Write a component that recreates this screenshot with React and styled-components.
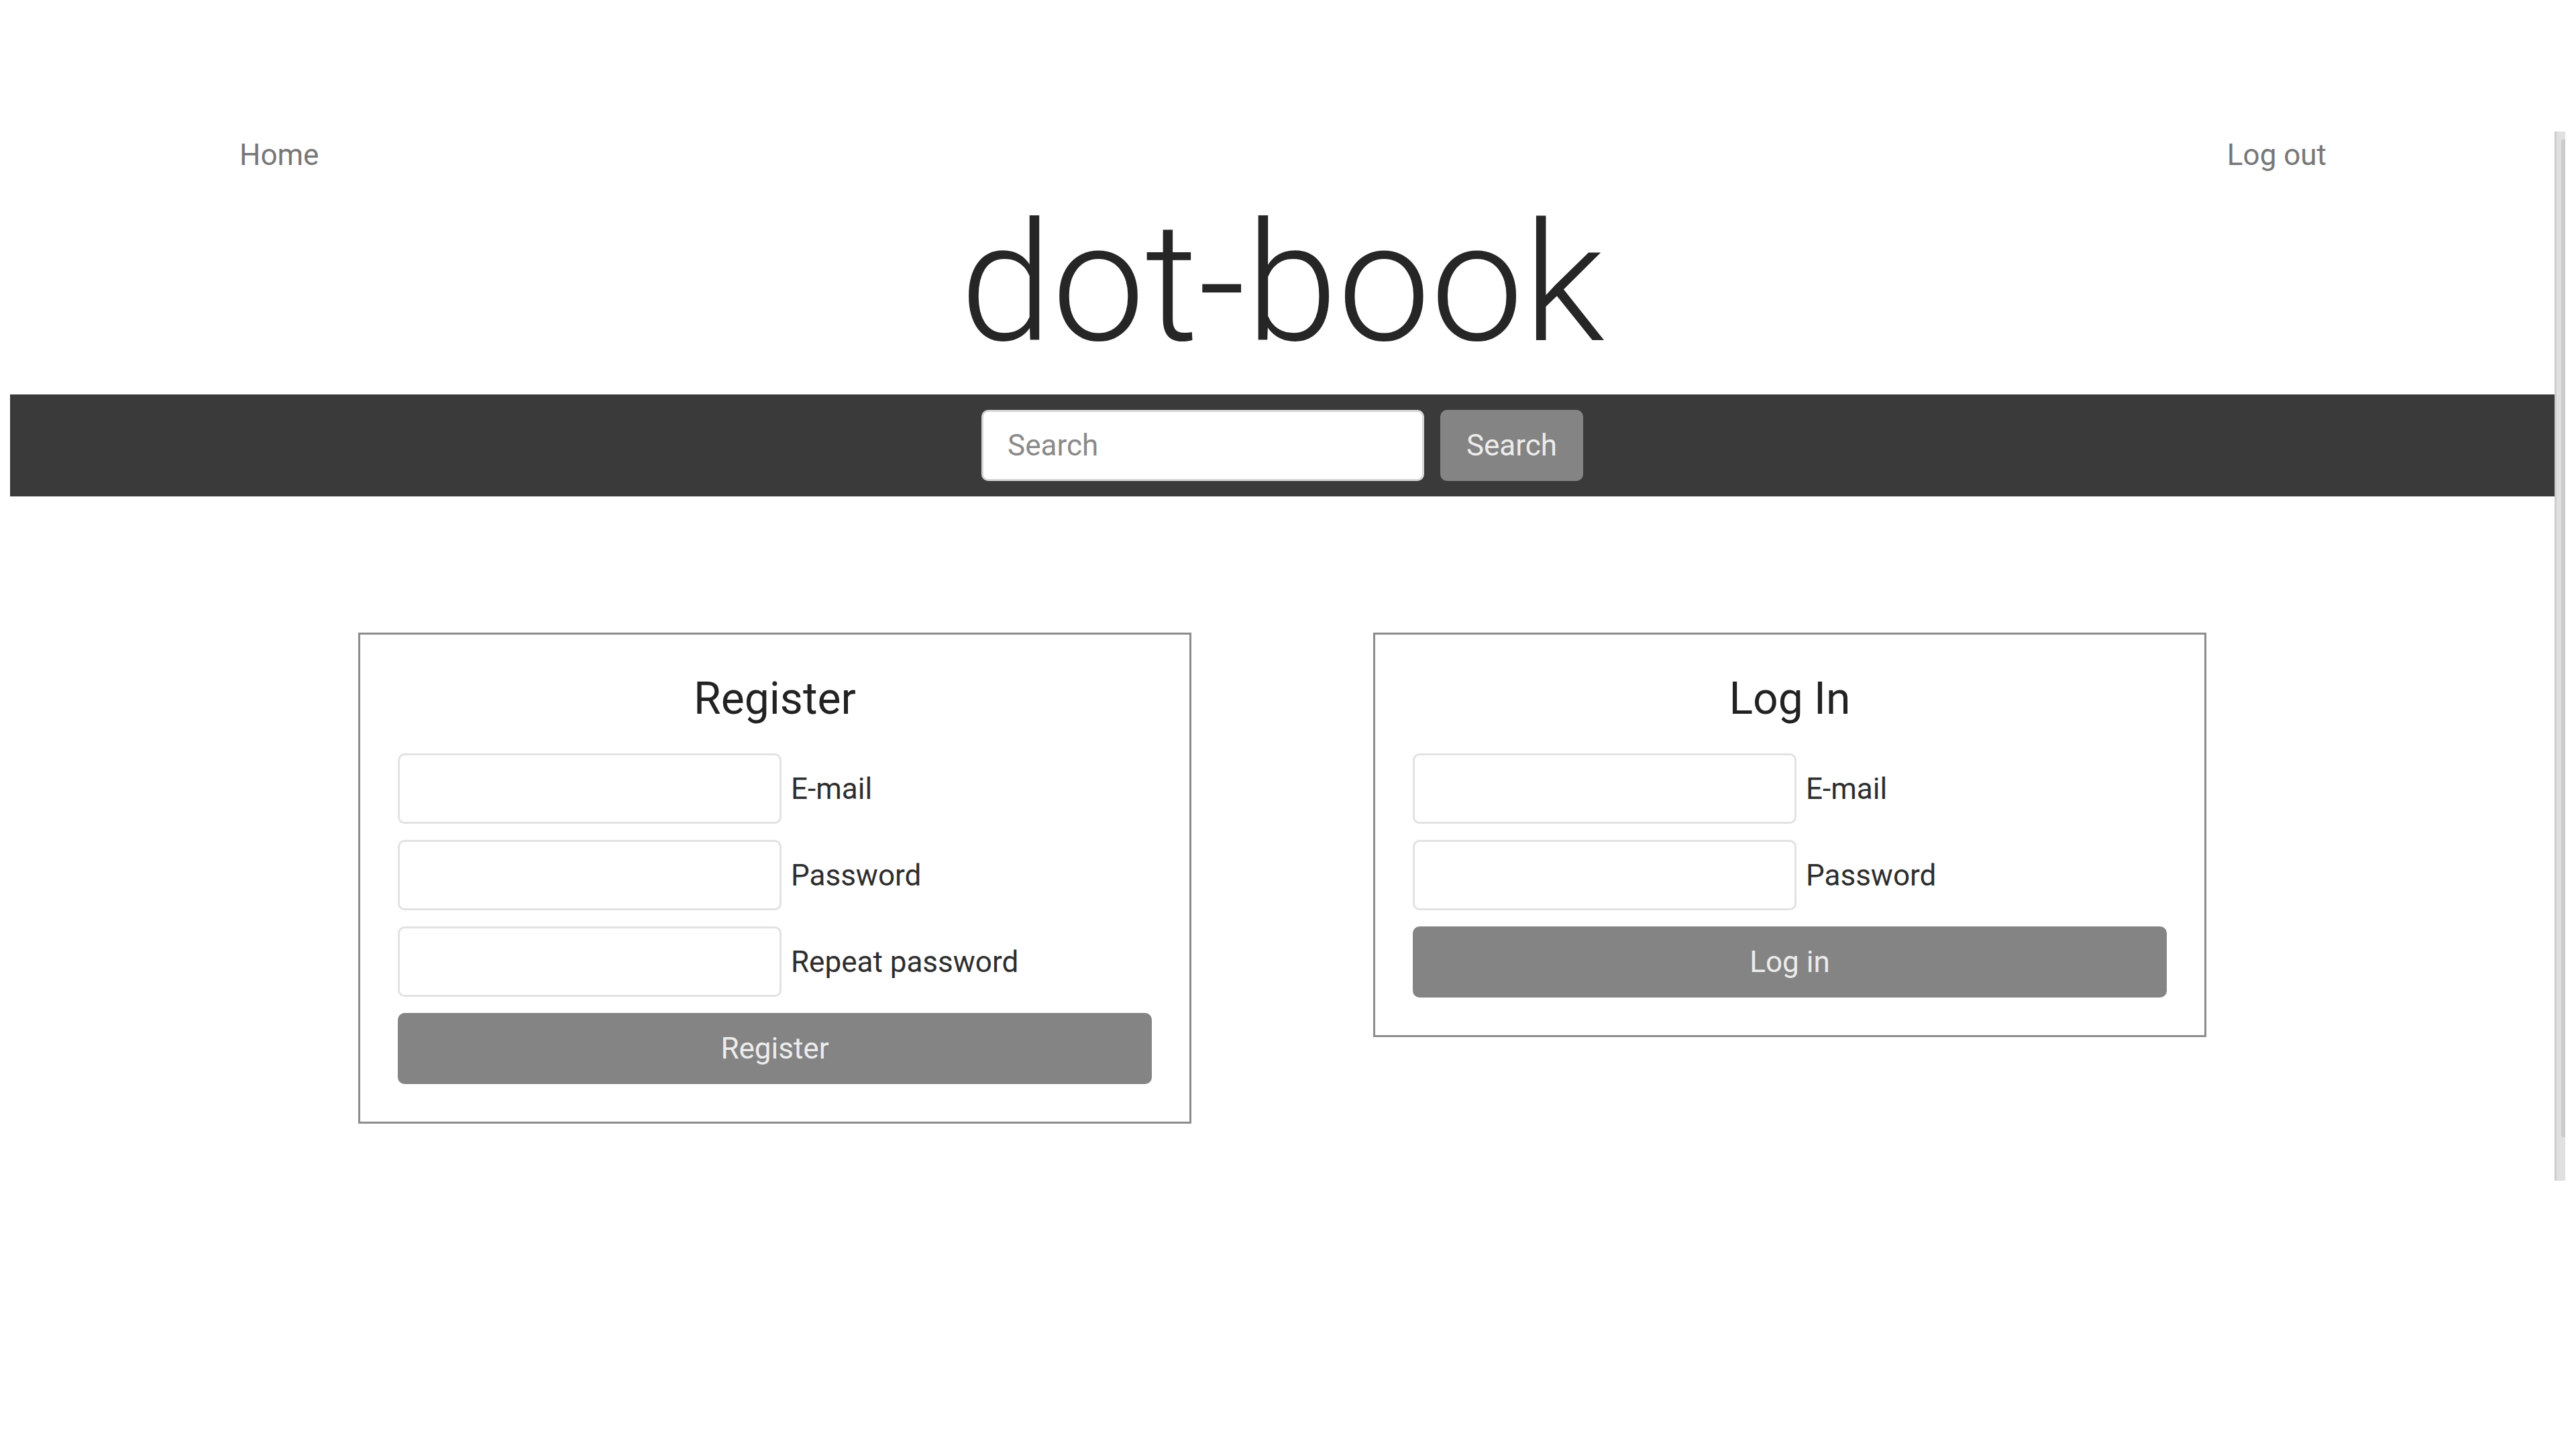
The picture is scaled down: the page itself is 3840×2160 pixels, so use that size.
import React, { useState } from "react";
import styled, { createGlobalStyle } from "styled-components";

const GlobalStyle = createGlobalStyle`
  html, body {
    margin: 0;
    padding: 0;
    background: #fff;
  }
  body {
    font-family: Roboto, "Liberation Sans", sans-serif;
  }
`;

const Frame = styled.div`
  display: flex;
  align-items: flex-start;
  padding: 0 16px 0 15px;
`;

const Page = styled.div`
  flex: 1;
  padding-top: 198px;
`;

const Nav = styled.nav`
  display: flex;
  justify-content: space-between;
  padding: 0 340px 0 342px;
  font-size: 44px;
  line-height: 66px;
`;

const NavLink = styled.a`
  color: #777;
  text-decoration: none;
  cursor: pointer;
`;

const Title = styled.h1`
  margin: 14px 0 20px;
  font-size: 247px;
  font-weight: 300;
  line-height: 290px;
  text-align: center;
  color: #262626;
`;

const SearchBar = styled.form`
  height: 152px;
  background: #3a3a3a;
  display: flex;
  justify-content: center;
  align-items: center;
  gap: 24px;
`;

const SearchInput = styled.input`
  width: 660px;
  height: 106px;
  box-sizing: border-box;
  border: 3px solid #d6d6d6;
  border-radius: 10px;
  padding: 0 36px;
  font-family: inherit;
  font-size: 44px;
  color: #333;
  outline: none;
  &::placeholder {
    color: #8a8a8a;
  }
`;

const GreyButton = styled.button`
  height: 106px;
  width: ${(p) => p.$width || "100%"};
  border: none;
  border-radius: 10px;
  background: #848484;
  color: #ececec;
  font-family: inherit;
  font-size: 44px;
  cursor: pointer;
`;

const Main = styled.main`
  display: flex;
  justify-content: center;
  align-items: flex-start;
  gap: 271px;
  padding-top: 203px;
`;

const Card = styled.form`
  width: 1242px;
  box-sizing: border-box;
  border: 3px solid #8c8c8c;
  padding: 56px;
  display: flex;
  flex-direction: column;
`;

const CardTitle = styled.h2`
  margin: 0 0 42px;
  font-size: 66px;
  font-weight: 400;
  line-height: 79px;
  text-align: center;
  color: #222;
`;

const Field = styled.div`
  display: flex;
  align-items: center;
  gap: 14px;
  margin-bottom: 24px;
`;

const TextInput = styled.input`
  width: 572px;
  height: 105px;
  box-sizing: border-box;
  border: 3px solid #e2e2e2;
  border-radius: 10px;
  padding: 0 30px;
  font-family: inherit;
  font-size: 44px;
  outline: none;
`;

const Label = styled.label`
  font-size: 44px;
  color: #2e2e2e;
`;

const Track = styled.div`
  width: 16px;
  height: 1564px;
  margin-top: 196px;
  box-sizing: border-box;
  background: #e0e0e0;
  border-left: 3px solid #cdcdcd;
  display: flex;
  justify-content: flex-end;
  padding: 12px 0 65px;
`;

const Thumb = styled.div`
  width: 6px;
  background: #cbcbcb;
  border-radius: 3px 0 0 3px;
`;

const InputRow = ({ label, type = "text" }) => (
  <Field>
    <TextInput type={type} />
    <Label>{label}</Label>
  </Field>
);

export default function App() {
  const [query, setQuery] = useState("");

  return (
    <>
      <GlobalStyle />
      <Frame>
        <Page>
          <Nav>
            <NavLink>Home</NavLink>
            <NavLink>Log out</NavLink>
          </Nav>
          <Title>dot-book</Title>
          <SearchBar onSubmit={(e) => e.preventDefault()}>
            <SearchInput
              placeholder="Search"
              value={query}
              onChange={(e) => setQuery(e.target.value)}
            />
            <GreyButton $width="213px">Search</GreyButton>
          </SearchBar>
          <Main>
            <Card onSubmit={(e) => e.preventDefault()}>
              <CardTitle>Register</CardTitle>
              <InputRow label="E-mail" type="email" />
              <InputRow label="Password" type="password" />
              <InputRow label="Repeat password" type="password" />
              <GreyButton>Register</GreyButton>
            </Card>
            <Card onSubmit={(e) => e.preventDefault()}>
              <CardTitle>Log In</CardTitle>
              <InputRow label="E-mail" type="email" />
              <InputRow label="Password" type="password" />
              <GreyButton>Log in</GreyButton>
            </Card>
          </Main>
        </Page>
        <Track>
          <Thumb />
        </Track>
      </Frame>
    </>
  );
}
